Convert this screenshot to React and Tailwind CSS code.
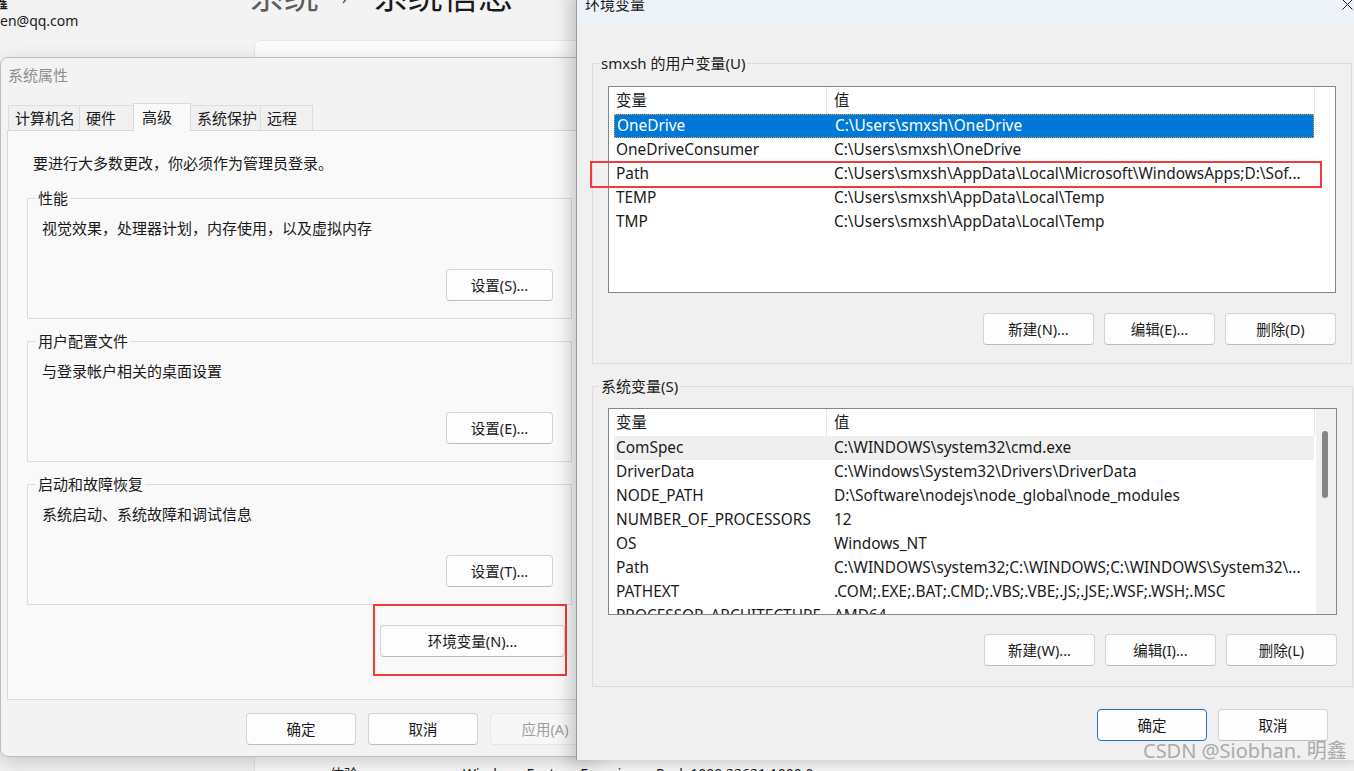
import React from "react";

const SANS = "font-['Noto_Sans','Noto_Sans_CJK_SC',sans-serif]";

const userVars = [
  ["OneDrive", "C:\\Users\\smxsh\\OneDrive"],
  ["OneDriveConsumer", "C:\\Users\\smxsh\\OneDrive"],
  ["Path", "C:\\Users\\smxsh\\AppData\\Local\\Microsoft\\WindowsApps;D:\\Sof..."],
  ["TEMP", "C:\\Users\\smxsh\\AppData\\Local\\Temp"],
  ["TMP", "C:\\Users\\smxsh\\AppData\\Local\\Temp"],
];

const systemVars = [
  ["ComSpec", "C:\\WINDOWS\\system32\\cmd.exe"],
  ["DriverData", "C:\\Windows\\System32\\Drivers\\DriverData"],
  ["NODE_PATH", "D:\\Software\\nodejs\\node_global\\node_modules"],
  ["NUMBER_OF_PROCESSORS", "12"],
  ["OS", "Windows_NT"],
  ["Path", "C:\\WINDOWS\\system32;C:\\WINDOWS;C:\\WINDOWS\\System32\\..."],
  ["PATHEXT", ".COM;.EXE;.BAT;.CMD;.VBS;.VBE;.JS;.JSE;.WSF;.WSH;.MSC"],
  ["PROCESSOR_ARCHITECTURE", "AMD64"],
];

const tabs = [
  { label: "计算机名", w: "w-[72px]" },
  { label: "硬件", w: "w-[55px]" },
  { label: "高级", w: "w-[58px]", active: true },
  { label: "系统保护", w: "w-[71px]" },
  { label: "远程", w: "w-[53px]" },
];

const WinButton = ({ children, width = "w-[111px]", primary = false, disabled = false }) => {
  let tone = "border-[#d3d3d3] border-b-[#bcbcbc] bg-[#fdfdfd] text-[#1a1a1a]";
  if (primary) tone = "border-[#2a72c0] bg-[#fdfdfd] text-[#1a1a1a]";
  if (disabled) tone = "border-[#e6e6e6] bg-[#f7f7f7] text-[#9e9e9e]";
  return (
    <button
      type="button"
      className={`h-8 ${width} shrink-0 rounded-[4px] border text-[14.5px] leading-none ${tone}`}
    >
      {children}
    </button>
  );
};

const GroupBox = ({ label, className = "", children }) => (
  <fieldset className={`border border-[#dcdcdc] ${className}`}>
    <legend className="px-[2px] text-[15px] leading-[20px] text-[#1a1a1a]">{label}</legend>
    {children}
  </fieldset>
);

const VarList = ({ rows, selected = -1, hover = -1, scrollbar = false }) => (
  <div className="flex h-[207px] overflow-hidden border border-[#868686] bg-white text-[15.4px] text-[#1a1a1a]">
    <div className="w-[706px] shrink-0">
      <div className="flex h-[27px]">
        <div className="flex w-[218px] items-center border-r border-[#e5e5e5] pl-[7px]">变量</div>
        <div className="flex w-[488px] items-center border-r border-[#e5e5e5] pl-[7px]">值</div>
      </div>
      <div className="ml-[5px] w-[700px]">
        {rows.map(([name, value], i) => (
          <div
            key={name}
            className={`flex h-6 items-center whitespace-nowrap ${
              i === selected
                ? "border border-dotted border-[#e9a24a] bg-[#0078d7] text-white"
                : i === hover
                ? "bg-[#efefef]"
                : ""
            }`}
          >
            <div className="w-[220px] shrink-0 overflow-hidden pl-[2px]">{name}</div>
            <div className="overflow-hidden">{value}</div>
          </div>
        ))}
      </div>
    </div>
    {scrollbar && (
      <div className="ml-auto w-[21px] border-l border-white bg-[#f0f0f0] pt-[22px]">
        <div className="ml-[6px] h-[67px] w-[6px] rounded-[3px] bg-[#858585]" />
      </div>
    )}
  </div>
);

const PerfGroup = ({ label, text, button, className = "" }) => (
  <GroupBox label={label} className={`h-[131px] w-[545px] [&>legend]:ml-[8px] ${className}`}>
    <div className="flex h-[110px] flex-col pl-[14px] pr-[18px] pt-[10px]">
      <div className="text-[15px] leading-[20px]">{text}</div>
      <div className="mt-auto flex justify-end pb-[17px]">
        <WinButton width="w-[107px]">{button}</WinButton>
      </div>
    </div>
  </GroupBox>
);

const SystemProperties = () => (
  <div className="absolute left-0 top-[57px] flex h-[700px] w-[600px] flex-col rounded-[8px] border border-[#bdbdbd] bg-[#f3f3f3] text-[#1a1a1a] shadow-[0_6px_20px_rgba(0,0,0,0.18)]">
    <div className="flex h-[34px] items-center pl-[7px] text-[15px] text-[#8f8f8f]">系统属性</div>
    <div className="mt-[11px] flex h-[27px] items-end pl-[7px] text-[15px]">
      {tabs.map((t, i) =>
        t.active ? (
          <div
            key={t.label}
            className={`relative z-10 -mb-px -ml-px flex h-[28px] ${t.w} items-center border border-b-0 border-[#d9d9d9] bg-[#f9f9f9] pl-[8px]`}
          >
            {t.label}
          </div>
        ) : (
          <div
            key={t.label}
            className={`flex h-[25px] ${t.w} items-center border border-b-0 border-[#dcdcdc] bg-[#f0f0f0] pl-[6px] ${i > 0 ? "-ml-px" : ""}`}
          >
            {t.label}
          </div>
        )
      )}
    </div>
    <div className="ml-[6px] h-[570px] w-[590px] border border-[#d9d9d9] bg-[#f9f9f9] px-[19px] pt-[22px]">
      <div className="ml-[6px] text-[15px] leading-[20px]">要进行大多数更改，你必须作为管理员登录。</div>
      <PerfGroup
        className="mt-[15px]"
        label="性能"
        text="视觉效果，处理器计划，内存使用，以及虚拟内存"
        button="设置(S)..."
      />
      <PerfGroup
        className="mt-[12px]"
        label="用户配置文件"
        text="与登录帐户相关的桌面设置"
        button="设置(E)..."
      />
      <PerfGroup
        className="mt-[12px]"
        label="启动和故障恢复"
        text="系统启动、系统故障和调试信息"
        button="设置(T)..."
      />
      <div className="mt-[20px] flex w-[545px] justify-end pr-[7px]">
        <WinButton width="w-[185px]">环境变量(N)...</WinButton>
      </div>
    </div>
    <div className="ml-[245px] mt-[13px] flex gap-[12px]">
      <WinButton width="w-[110px]">确定</WinButton>
      <WinButton width="w-[110px]">取消</WinButton>
      <WinButton width="w-[110px]" disabled>
        应用(A)
      </WinButton>
    </div>
    <div className="absolute left-[372px] top-[546px] h-[72px] w-[194px] border-2 border-[#f23a3a]" />
  </div>
);

const EnvironmentVariables = () => (
  <div className="absolute left-[576px] top-[-14px] flex h-[774px] w-[792px] flex-col border-l border-[#9c9c9c] bg-[#f0f0f0] text-[#1a1a1a] shadow-[-6px_4px_16px_rgba(0,0,0,0.2)]">
    <div className="flex h-[37px] shrink-0 items-center justify-between bg-[#eef3f9] pl-[8px] pr-[15px]">
      <span className="text-[15px]">环境变量</span>
      <svg width="11" height="11" viewBox="0 0 11 11" fill="none" stroke="#1a1a1a" strokeWidth="1">
        <path d="M0.5 0.5L10.5 10.5M10.5 0.5L0.5 10.5" />
      </svg>
    </div>
    <GroupBox label="smxsh 的用户变量(U)" className="ml-[15px] mt-[30px] h-[311px] w-[760px] [&>legend]:ml-[6px]">
      <div className="px-[15px] pt-[13px]">
        <VarList rows={userVars} selected={0} />
        <div className="mt-[20px] flex justify-end gap-[10px]">
          <WinButton>新建(N)...</WinButton>
          <WinButton>编辑(E)...</WinButton>
          <WinButton>删除(D)</WinButton>
        </div>
      </div>
    </GroupBox>
    <GroupBox label="系统变量(S)" className="ml-[15px] mt-[12px] h-[311px] w-[760px] [&>legend]:ml-[6px]">
      <div className="px-[15px] pt-[12px]">
        <VarList rows={systemVars} hover={0} scrollbar />
        <div className="mt-[19px] flex justify-end gap-[10px]">
          <WinButton>新建(W)...</WinButton>
          <WinButton>编辑(I)...</WinButton>
          <WinButton>删除(L)</WinButton>
        </div>
      </div>
    </GroupBox>
    <div className="mt-[22px] flex justify-end gap-[11px] pr-[40px]">
      <WinButton width="w-[110px]" primary>
        确定
      </WinButton>
      <WinButton width="w-[110px]">取消</WinButton>
    </div>
    <div className="absolute left-[13px] top-[175px] h-[27px] w-[732px] border-2 border-[#f23a3a]" />
  </div>
);

export default function App() {
  return (
    <div className={`relative h-[771px] w-[1354px] overflow-hidden bg-[#f3f3f3] ${SANS}`}>
      {/* settings page behind the dialogs */}
      <div className="absolute left-[-7px] top-[-9px] text-[15px] font-bold text-[#1a1a1a]">鑫</div>
      <div className="absolute left-0 top-[11px] text-[14px] leading-[20px] text-[#1a1a1a]">en@qq.com</div>
      <div className="absolute left-[249px] top-[-22px] flex items-center text-[35px] leading-[35px]">
        <span className="text-[#5d5d5d]">系统</span>
        <svg className="mx-[22px]" width="10" height="16" viewBox="0 0 10 16" fill="none" stroke="#5d5d5d" strokeWidth="1.5">
          <path d="M2 1l6 7-6 7" />
        </svg>
        <span className="text-[#1a1a1a]">系统信息</span>
      </div>
      <div className="absolute left-[254px] top-[40px] h-[760px] w-[1200px] rounded-t-[6px] border border-[#e5e5e5] bg-[#fbfbfb]">
        <div className="absolute left-[75px] top-[723px] flex text-[14px] leading-[20px] text-[#1a1a1a]">
          <span className="w-[133px]">体验</span>
          <span>Windows Feature Experience Pack 1000.22621.1000.0</span>
        </div>
      </div>

      <SystemProperties />
      <EnvironmentVariables />

      <div className="absolute left-[1143px] top-[739px] text-[20px] leading-[24px] text-[#ababab]">
        CSDN @Siobhan. 明鑫
      </div>
    </div>
  );
}
